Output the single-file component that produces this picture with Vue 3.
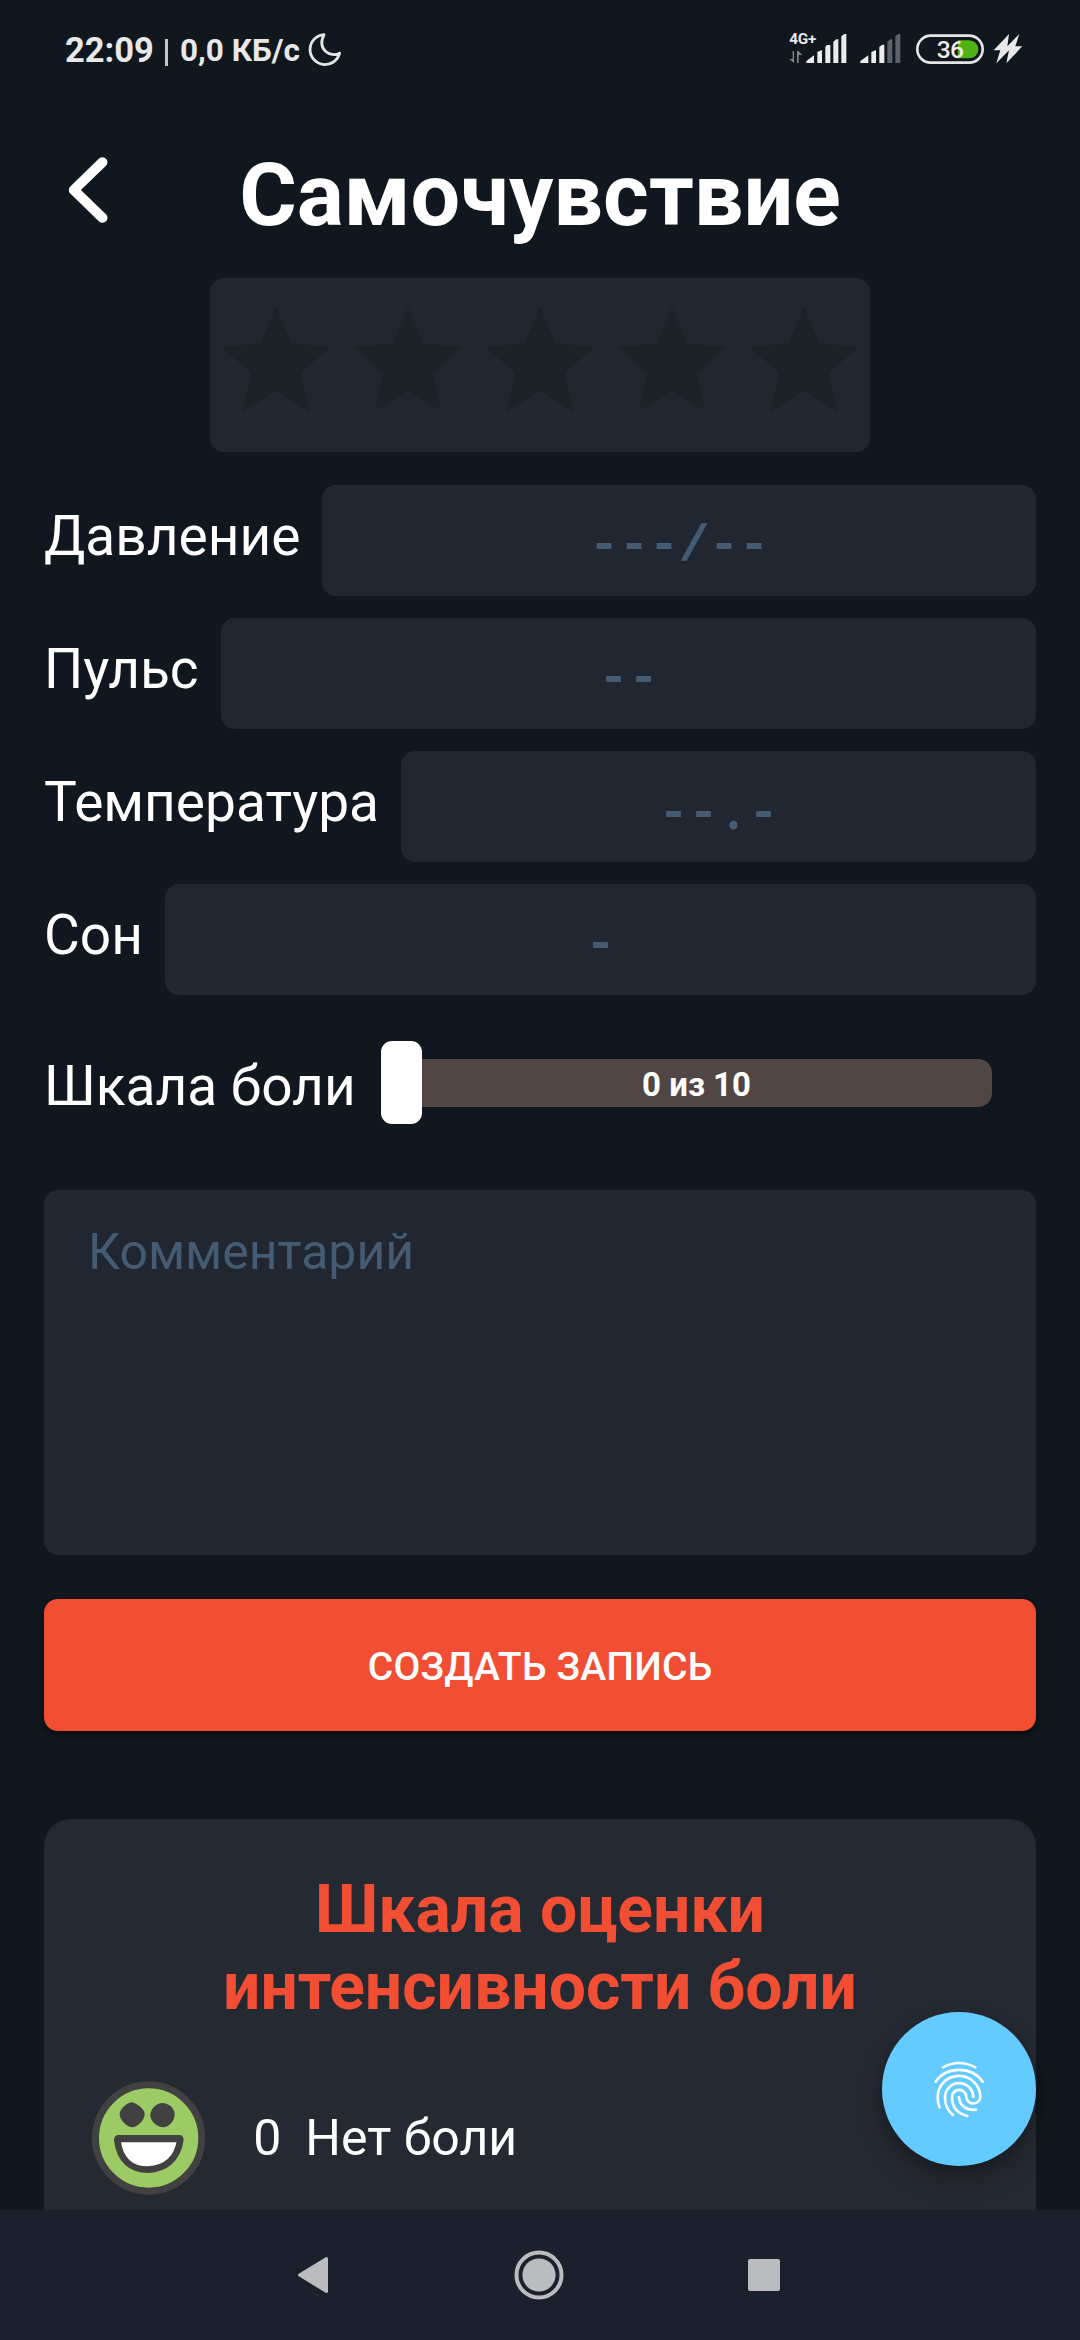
<script setup>
const fields = [
  { label: 'Давление', hint: '---/--', width: 714 },
  { label: 'Пульс', hint: '--', width: 815 },
  { label: 'Температура', hint: '--.-', width: 635 },
  { label: 'Сон', hint: '-', width: 871 },
]

const glyphClass = (ch) => ({ slash: ch === '/', dot: ch === '.' })
</script>

<template>
  <div class="screen">
    <div class="status">
      <span class="clock">22:09</span>
      <span class="divider"></span>
      <span class="speed">0,0 КБ/с</span>
      <svg class="moon" viewBox="0 0 36 36" width="36" height="36">
        <path d="M17 2.6A15 15 0 1 0 32.6 21.2C24 26 9.500 18 17 2.600Z" fill="none" stroke="#e6e6e6" stroke-width="2.800" stroke-linejoin="round" />
      </svg>
      <div class="spacer"></div>
      <svg class="signals" viewBox="80 60 345 105" width="115" height="35">
        <text x="84" y="102" class="net">4G+</text>
        <g fill="#80858b">
          <path d="M94 123h4v36l-14-12h10zM107 159v-36h4l12 12h-11v24z" />
        </g>
        <g fill="#ececec">
          <path d="M135 159v-6l23-17v23zM168 159v-33l14-6v39zM192 159v-49l5-5h10v54zM216 159v-64l9-7h6v71zM240 159v-80l9-7h6v87z" />
          <path d="M297 159v-6l24-17v23zM330 159v-33l14-6v39zM354 159v-49l9-6h6v55z" />
        </g>
        <path fill="#5c626a" d="M378 159v-64l9-7h6v71zM402 159v-80l9-7h6v87z" />
      </svg>
      <svg class="battery" viewBox="462 68 210 96" width="70" height="32">
        <rect x="469" y="76" width="196" height="81" rx="40.500" fill="none" stroke="#e6e6e6" stroke-width="8" />
        <path d="M590 90h35a27 27 0 0 1 0 54h-35z" fill="#50b215" />
        <text x="527" y="143" class="level">36</text>
      </svg>
      <svg class="bolt" viewBox="698 70 90 93" width="30" height="31">
        <path d="M746 73L700 122H720L708 161L746 122L738 161L786 110H765L777 73L741 110Z" fill="#e8e8e8" />
      </svg>
    </div>

    <main class="content">
      <header class="header">
        <svg class="back" viewBox="0 0 46 70" width="46" height="70">
          <path d="M38.500 7.200L9.800 35L38.500 62.800" fill="none" stroke="#fff" stroke-width="10" stroke-linecap="round" stroke-linejoin="round" />
        </svg>
        <h1>Самочувствие</h1>
      </header>

      <div class="rating">
        <svg v-for="n in 5" :key="n" viewBox="0 0 24 24" width="132" height="132">
          <path d="M12 17.27L18.18 21l-1.640-7.030L22 9.240l-7.190-.610L12 2 9.190 8.630 2 9.240l5.460 4.730L5.820 21z" fill="#1b2329" />
        </svg>
      </div>

      <div class="fields">
        <div v-for="f in fields" :key="f.label" class="field">
          <label>{{ f.label }}</label>
          <div class="input" :style="{ width: f.width + 'px' }">
            <span v-for="(ch, i) in f.hint" :key="i" class="glyph" :class="glyphClass(ch)">{{ ch }}</span>
          </div>
        </div>
      </div>

      <div class="pain">
        <label>Шкала боли</label>
        <div class="slider">
          <div class="track">0 из 10</div>
          <div class="thumb"></div>
        </div>
      </div>

      <div class="comment">Комментарий</div>
      <button class="submit">СОЗДАТЬ ЗАПИСЬ</button>

      <section class="card">
        <h2>Шкала оценки<br />интенсивности боли</h2>
        <div class="level-row">
          <svg class="face" viewBox="36 63 340 342" width="113.300" height="114">
            <circle cx="206" cy="234" r="159.500" fill="#9ccb65" stroke="#414141" stroke-width="21" />
            <path d="M156 127C166 128 194 146 194 162C194 182 170 202 157 202C144 202 120 182 119 164C118 146 144 127 156 127Z" fill="#414141" />
            <path d="M247 129C266 129 284 144 284 163C284 184 266 202 249 202C231 202 212 184 211 166C211 146 230 129 247 129Z" fill="#414141" />
            <path d="M118 235Q112 235 112 241C120 302 154 329 204 329C256 326 292 298 301 240Q302 234 296 235Z" fill="#fff" stroke="#414141" stroke-width="20" stroke-linejoin="round" />
            <path d="M112 236H302" stroke="#414141" stroke-width="21" />
          </svg>
          <span class="num">0</span>
          <span>Нет боли</span>
        </div>
      </section>
    </main>

    <div class="fab">
      <svg viewBox="216 206 162 180" width="54" height="60" fill="none" stroke="#fff" stroke-width="8" stroke-linecap="round">
        <path d="M249 231Q297 205 346 231" />
        <path d="M227 274C260 227 334 227 368 274" />
        <path d="M239 351C234 341 233 331 233 322A64 64 0 0 1 361 319A21 20 0 0 1 319 320A21.500 21.500 0 0 0 276 320C276 350 293 370 322 377" />
        <path d="M279 374C263 361 255 342 255 322A42.500 42.500 0 0 1 340 320" />
        <path d="M297 320C298 345 319 361 348 358" />
      </svg>
    </div>

    <nav class="nav">
      <svg viewBox="0 0 32 38" width="32" height="38">
        <path d="M2.500 19L29.500 2.500V35.500Z" fill="#bbbcc0" stroke="#bbbcc0" stroke-width="3" stroke-linejoin="round" />
      </svg>
      <svg viewBox="0 0 50 50" width="50" height="50">
        <circle cx="25" cy="25" r="22.500" fill="none" stroke="#bbbcc0" stroke-width="4" />
        <circle cx="25" cy="25" r="16.600" fill="#bbbcc0" />
      </svg>
      <span class="square"></span>
    </nav>
  </div>
</template>

<style>
body {
  background: #10171e;
}
</style>

<style scoped>
.screen {
  position: relative;
  display: flex;
  flex-direction: column;
  width: 1080px;
  height: 2340px;
  overflow: hidden;
  background: #10171e;
  color: #fff;
  font-family: Roboto, "Noto Sans", sans-serif;
}
.status {
  display: flex;
  align-items: flex-start;
  height: 100px;
  flex: none;
  box-sizing: border-box;
  padding: 30px 57px 0 65px;
  color: #e8e8e8;
  font-weight: 700;
  white-space: nowrap;
}
.clock {
  width: 100px;
  font-size: 34.500px;
  line-height: 40px;
}
.divider {
  width: 3px;
  height: 27px;
  margin: 9px 12px 0 0;
  background: #c4c5c6;
}
.speed {
  width: 127px;
  font-size: 31.500px;
  line-height: 42px;
}
.moon {
  margin-top: 2px;
}
.spacer {
  flex: 1;
}
.net {
  font: 700 46px Roboto, sans-serif;
  letter-spacing: -1px;
  fill: #e8e8e8;
}
.signals {
  margin-right: 12px;
}
.battery {
  margin-top: 3px;
  margin-right: 8px;
}
.level {
  font: 500 74px Roboto, sans-serif;
  letter-spacing: -2px;
  fill: #ececec;
}
.bolt {
  margin-top: 3px;
}
.content {
  flex: 1;
  min-height: 0;
  overflow: hidden;
  display: flex;
  flex-direction: column;
  padding: 0 44px;
}
.header {
  display: grid;
  grid-template-columns: 132px 1fr 132px;
  height: 178px;
  flex: none;
}
.back {
  margin: 55px 0 0 20px;
}
h1 {
  margin: 43px 0 0;
  font-size: 88px;
  line-height: 104px;
  font-weight: 700;
  text-align: center;
  white-space: nowrap;
}
.rating {
  display: flex;
  align-self: center;
  flex: none;
  width: 660px;
  height: 174px;
  box-sizing: border-box;
  padding-top: 18px;
  border-radius: 14px;
  background: #202730;
}
.fields {
  display: flex;
  flex: none;
  flex-direction: column;
  gap: 22px;
  margin-top: 33px;
}
.field {
  display: flex;
  justify-content: space-between;
  height: 111px;
}
label {
  font-size: 55px;
  line-height: 64px;
  white-space: nowrap;
}
.field label {
  padding-top: 19px;
}
.input {
  display: flex;
  justify-content: center;
  align-items: baseline;
  flex: none;
  box-sizing: border-box;
  padding-top: 5px;
  border-radius: 14px;
  background: #202730;
  color: #445b71;
  font-family: "DejaVu Sans Mono", monospace;
  font-size: 50px;
  line-height: 106px;
}
.glyph {
  width: 30px;
  text-align: center;
  -webkit-text-stroke: 2px #445b71;
}
.glyph.slash {
  font-family: "Liberation Mono", monospace;
  -webkit-text-stroke-width: 1.5px;
}
.glyph.dot {
  font-family: "Noto Sans", sans-serif;
}
.pain {
  display: flex;
  flex: none;
  justify-content: space-between;
  height: 83px;
  margin-top: 46px;
  padding-right: 44px;
}
.pain label {
  padding-top: 13px;
}
.slider {
  display: flex;
  align-items: center;
  position: relative;
  width: 611px;
}
.track {
  width: 591px;
  margin-left: auto;
  height: 48px;
  border-radius: 14px;
  background: #504644;
  font-size: 33px;
  line-height: 52px;
  font-weight: 700;
  text-align: center;
}
.thumb {
  position: absolute;
  left: 0;
  top: 0;
  width: 41px;
  height: 83px;
  border-radius: 11px;
  background: #fff;
}
.comment {
  flex: none;
  height: 365px;
  box-sizing: border-box;
  margin-top: 66px;
  padding: 33px 44px;
  border-radius: 14px;
  background: #202730;
  color: #445b71;
  font-size: 50px;
  line-height: 58px;
}
.submit {
  flex: none;
  height: 132px;
  margin-top: 44px;
  padding: 3px 0 0;
  border: 0;
  border-radius: 14px;
  background: #f24e33;
  box-shadow: 0 3px 6px rgba(0, 0, 0, 0.5);
  color: #fff;
  font: 500 39px Roboto, sans-serif;
  letter-spacing: 0.2px;
}
.card {
  flex: none;
  height: 500px;
  margin-top: 88px;
  border-radius: 27px;
  background: #252932;
}
h2 {
  margin: 52px 0 0;
  color: #f24e33;
  font-size: 66px;
  line-height: 77px;
  font-weight: 700;
  text-align: center;
}
.level-row {
  display: flex;
  align-items: center;
  margin-top: 56px;
  padding-left: 48px;
  font-size: 50px;
  line-height: 58px;
}
.level-row .num {
  width: 52px;
  margin-left: 48px;
}
.fab {
  position: absolute;
  left: 882px;
  top: 2012px;
  display: flex;
  align-items: center;
  justify-content: center;
  width: 154px;
  height: 154px;
  border-radius: 50%;
  background: #63cbff;
  box-shadow: 0 14px 26px rgba(0, 0, 0, 0.24), 0 3px 10px rgba(0, 0, 0, 0.16);
}
.nav {
  flex: none;
  display: flex;
  align-items: center;
  justify-content: space-between;
  height: 130px;
  box-sizing: border-box;
  padding: 0 300px 0 297px;
  background: #1b212c;
}
.square {
  width: 32px;
  height: 32px;
  border-radius: 2px;
  background: #bbbcc0;
}
</style>
